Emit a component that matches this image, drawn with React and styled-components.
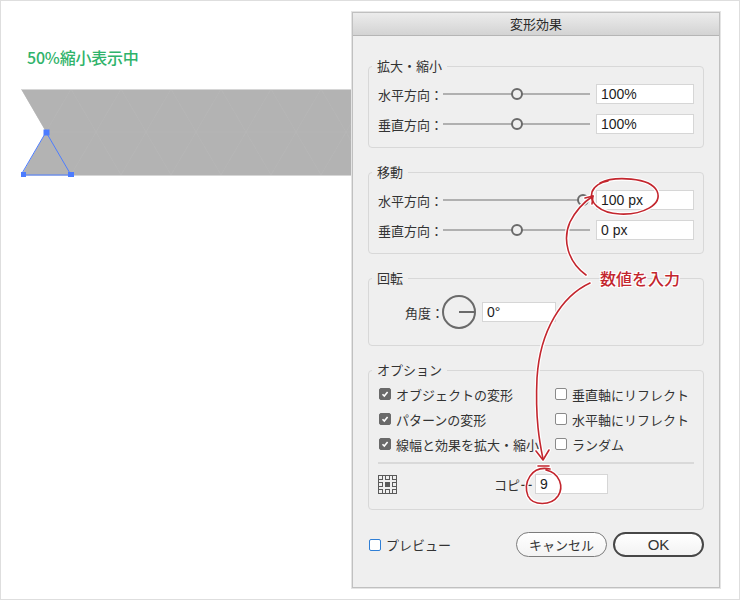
import React from 'react';
import styled, { createGlobalStyle } from 'styled-components';

const GlobalStyle = createGlobalStyle`
  html, body { margin: 0; padding: 0; background: #fff; }
  body { font-family: "Noto Sans CJK JP", "Noto Sans", sans-serif; }
`;

const Page = styled.div`
  position: relative;
  width: 740px;
  height: 600px;
  box-sizing: border-box;
  border: 1px solid #dedede;
  display: flex;
  align-items: flex-start;
  overflow: hidden;
  background: #fff;
`;

const Canvas = styled.div`
  width: 351px;
  flex-shrink: 0;
  display: flex;
  flex-direction: column;
`;

const Caption = styled.div`
  margin: 46px 0 0 26px;
  font-size: 16px;
  line-height: 20px;
  font-weight: 500;
  color: #2fb36a;
  letter-spacing: -0.2px;
`;

const Artwork = styled.svg`
  display: block;
  margin: 22px 0 0 20px;
`;

const Dialog = styled.div`
  margin-top: 11px;
  width: 368px;
  height: 576px;
  box-sizing: border-box;
  border: 1px solid #c0c0c0;
  box-shadow: 0 0 0 1px #e4e4e4;
  background: #efefef;
  display: flex;
  flex-direction: column;
`;

const TitleBar = styled.div`
  height: 22px;
  line-height: 22px;
  text-align: center;
  font-size: 13px;
  color: #2a2a2a;
  background: linear-gradient(#ececec, #d3d3d3);
  border-bottom: 1px solid #b5b5b5;
`;

const Body = styled.div`
  padding: 30px 15px 0;
  display: flex;
  flex-direction: column;
`;

const Group = styled.div`
  border: 1px solid #d8d8d8;
  border-radius: 4px;
  padding: 0 9px ${p => p.$pb}px;
  & + & { margin-top: 24px; }
`;

const Legend = styled.div`
  display: table;
  margin: -9px 0 0 -6px;
  padding: 0 5px;
  background: #efefef;
  font-size: 13px;
  line-height: 16px;
  color: #333;
`;

const Rows = styled.div`
  display: flex;
  flex-direction: column;
  gap: ${p => p.$gap}px;
  padding-top: ${p => p.$pt}px;
`;

const Row = styled.div`
  display: flex;
  align-items: center;
  height: ${p => p.$h || 20}px;
  padding-left: ${p => p.$indent || 0}px;
`;

const Label = styled.span`
  font-size: 13px;
  color: #333;
  white-space: nowrap;
  margin-right: ${p => p.$mr || 0}px;
  margin-left: ${p => p.$ml || 0}px;
`;

const Slider = styled.div`
  position: relative;
  flex: 1;
  height: 12px;
  &::before {
    content: '';
    position: absolute;
    left: 0;
    right: 0;
    top: 5px;
    height: 2px;
    background: #b0b0b0;
  }
`;

const Knob = styled.span`
  position: absolute;
  top: 0;
  width: 12px;
  height: 12px;
  margin-left: -6px;
  box-sizing: border-box;
  border: 2px solid #6a6a6a;
  border-radius: 50%;
  background: #efefef;
`;

const Field = styled.input`
  width: ${p => p.$w}px;
  height: 20px;
  margin-left: ${p => p.$ml || 6}px;
  box-sizing: border-box;
  border: 1px solid #d6d6d6;
  background: #fff;
  padding: 0 0 0 4px;
  font-family: "Liberation Sans", Arial, sans-serif;
  font-size: 14px;
  color: #1d1d1d;
  outline: none;
`;

const Checks = styled.div`
  display: grid;
  grid-template-columns: 176px 1fr;
  grid-auto-rows: 20px;
  row-gap: 5px;
  padding: 6px 0 0 1px;
`;

const Check = styled.div`
  display: flex;
  align-items: center;
  gap: 5px;
  font-size: 13px;
  color: #333;
  white-space: nowrap;
`;

const Box = styled.span`
  width: 12px;
  height: 12px;
  box-sizing: border-box;
  border-radius: 2px;
  flex-shrink: 0;
  display: flex;
  align-items: center;
  justify-content: center;
  background: ${p => (p.$on ? '#6a6a6a' : '#fff')};
  border: 1px solid ${p => (p.$on ? '#6a6a6a' : p.$blue ? '#2f7fd6' : '#8a8a8a')};
`;

const Divider = styled.div`
  height: 2px;
  background: #d9d9d9;
  margin-top: 8px;
`;

const CopyRow = styled.div`
  display: flex;
  align-items: center;
  height: 20px;
  margin-top: 10px;
`;

const Footer = styled.div`
  display: flex;
  align-items: center;
  height: 25px;
  margin-top: 22px;
  padding-left: 1px;
`;

const Buttons = styled.div`
  margin-left: auto;
  display: flex;
  gap: 6px;
`;

const Button = styled.button`
  width: 91px;
  height: 25px;
  box-sizing: border-box;
  border-radius: 13px;
  border: ${p => (p.$primary ? '2px solid #474747' : '1px solid #7c7c7c')};
  background: linear-gradient(#ffffff, #f3f3f3);
  font-family: ${p => (p.$primary ? '"Liberation Sans", Arial, sans-serif' : '"Noto Sans CJK JP", sans-serif')};
  font-size: ${p => (p.$primary ? 15 : 13)}px;
  color: #333;
  padding: 0;
`;

const Overlay = styled.svg`
  position: absolute;
  left: -1px;
  top: -1px;
  pointer-events: none;
`;

const Note = styled.div`
  position: absolute;
  left: 599px;
  top: 267px;
  font-size: 16px;
  line-height: 20px;
  font-weight: 500;
  color: #c3262e;
  text-shadow: 0 0 2px #fff, 1px 1px 0 #fff, -1px -1px 0 #fff, 1px -1px 0 #fff, -1px 1px 0 #fff;
`;

const Tick = () => (
  <svg width="8" height="8" viewBox="0 0 8 8">
    <path d="M1.5 4.2 L3.3 6 L6.6 2" stroke="#fff" strokeWidth="1.6" fill="none" />
  </svg>
);

const CheckItem = ({ on, children }) => (
  <Check>
    <Box $on={on}>{on && <Tick />}</Box>
    {children}
  </Check>
);

const SliderRow = ({ label, knob, value }) => (
  <Row>
    <Label>{label}</Label>
    <Slider>
      <Knob style={{ left: `${knob}%` }} />
    </Slider>
    <Field $w={98} readOnly value={value} />
  </Row>
);

const Dial = () => (
  <svg width="34" height="34" viewBox="0 0 34 34">
    <circle cx="17" cy="17" r="16" fill="none" stroke="#6a6a6a" strokeWidth="2" />
    <path d="M17 17 H33" stroke="#6a6a6a" strokeWidth="2" />
  </svg>
);

const RefPoint = () => (
  <svg width="19" height="19" viewBox="0 0 19 19">
    <g fill="none" stroke="#5a5a5a" strokeWidth="1">
      {[0, 7, 14].map(y =>
        [0, 7, 14].map(x => <rect key={`${x}-${y}`} x={x + 0.5} y={y + 0.5} width="4" height="4" fill={x === 7 && y === 7 ? '#5a5a5a' : 'none'} />)
      )}
      <path d="M5 0.5 H7 M12 0.5 H14 M5 18.5 H7 M12 18.5 H14 M0.5 5 V7 M0.5 12 V14 M18.5 5 V7 M18.5 12 V14" />
    </g>
  </svg>
);

const Shape = () => {
  const lines = [];
  for (let k = -1; k < 8; k++) {
    const x = 50 + 50 * k;
    lines.push(<path key={k} d={`M${x} 0 L${x - 50} 86 M${x} 0 L${x + 50} 86`} />);
  }
  return (
    <Artwork width="331" height="88" viewBox="0 0 331 88">
      <defs>
        <clipPath id="band">
          <polygon points="0,0 331,0 331,87 0,87 25,43" />
        </clipPath>
      </defs>
      <polygon points="0,0 331,0 331,87 0,87 25,43" fill="#b3b3b3" />
      <g clipPath="url(#band)" stroke="#b9b9b9" strokeWidth="0.6" fill="none">
        {lines}
        <path d="M0 43 H331" />
      </g>
      <path d="M0 0.5 H331 M0 86.5 H331" stroke="#d6d6d6" strokeWidth="1" />
      <polygon points="25,43 0,86 50,86" fill="none" stroke="#4c7cff" strokeWidth="1" />
      <rect x="22.5" y="40.5" width="6" height="6" fill="#4c7cff" />
      <rect x="-1" y="83" width="6" height="6" fill="#4c7cff" />
      <rect x="47" y="83" width="6" height="6" fill="#4c7cff" />
    </Artwork>
  );
};

const Marks = () => {
  const paths = [
    'M600 183 C614 176, 650 177, 657 191 C663 205, 642 215, 620 214 C599 213, 589 202, 592 192 C594 186, 601 182, 608 181',
    'M586 275 C568 262, 562 240, 570 222 C576 210, 584 202, 593 196',
    'M585 198 L593 196 L592 204',
    'M590 283 C562 296, 540 330, 537 378 C535 420, 540 444, 543 459',
    'M536 451 L543 460 L549 450',
    'M550 469 C531 465, 523 483, 528 496 C533 506, 551 506, 558 496 C564 487, 560 473, 546 470',
    'M538 466 L549 466',
  ];
  return (
    <Overlay width="740" height="600" viewBox="0 0 740 600">
      <g fill="none" strokeLinecap="round" strokeLinejoin="round">
        {paths.map((d, i) => <path key={`w${i}`} d={d} stroke="#fff" strokeWidth="4" />)}
        {paths.map((d, i) => <path key={`r${i}`} d={d} stroke="#c3262e" strokeWidth="1.6" />)}
      </g>
    </Overlay>
  );
};

export default function App() {
  return (
    <>
      <GlobalStyle />
      <Page>
        <Canvas>
          <Caption>50%縮小表示中</Caption>
          <Shape />
        </Canvas>
        <Dialog>
          <TitleBar>変形効果</TitleBar>
          <Body>
            <Group $pb={13}>
              <Legend>拡大・縮小</Legend>
              <Rows $pt={10} $gap={10}>
                <SliderRow label="水平方向：" knob={50} value="100%" />
                <SliderRow label="垂直方向：" knob={50} value="100%" />
              </Rows>
            </Group>
            <Group $pb={13}>
              <Legend>移動</Legend>
              <Rows $pt={10} $gap={10}>
                <SliderRow label="水平方向：" knob={95} value="100 px" />
                <SliderRow label="垂直方向：" knob={50} value="0 px" />
              </Rows>
            </Group>
            <Group $pb={16}>
              <Legend>回転</Legend>
              <Rows $pt={9} $gap={0}>
                <Row $h={34} $indent={27}>
                  <Label $mr={-2}>角度：</Label>
                  <Dial />
                  <Field $w={74} readOnly value="0°" />
                </Row>
              </Rows>
            </Group>
            <Group $pb={15}>
              <Legend>オプション</Legend>
              <Checks>
                <CheckItem on>オブジェクトの変形</CheckItem>
                <CheckItem>垂直軸にリフレクト</CheckItem>
                <CheckItem on>パターンの変形</CheckItem>
                <CheckItem>水平軸にリフレクト</CheckItem>
                <CheckItem on>線幅と効果を拡大・縮小</CheckItem>
                <CheckItem>ランダム</CheckItem>
              </Checks>
              <Divider />
              <CopyRow>
                <RefPoint />
                <Label $ml={97}>コピー</Label>
                <Field $w={73} $ml={2} readOnly value="9" />
              </CopyRow>
            </Group>
            <Footer>
              <Check>
                <Box $blue />
                プレビュー
              </Check>
              <Buttons>
                <Button>キャンセル</Button>
                <Button $primary>OK</Button>
              </Buttons>
            </Footer>
          </Body>
        </Dialog>
        <Marks />
        <Note>数値を入力</Note>
      </Page>
    </>
  );
}
